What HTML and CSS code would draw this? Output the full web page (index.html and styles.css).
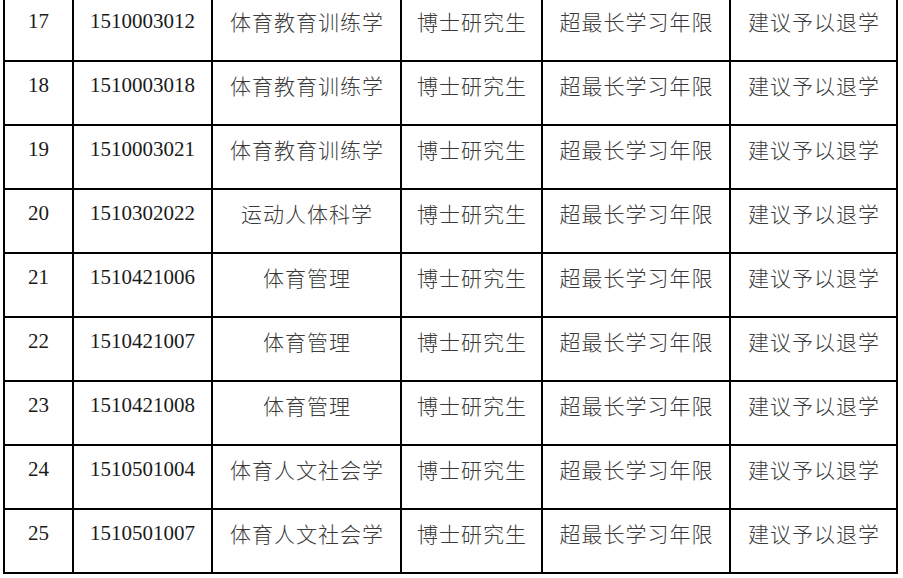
FILE: index.html
```html
<!DOCTYPE html>
<html lang="zh-CN">
<head>
<meta charset="utf-8">
<title>退学名单</title>
<link rel="stylesheet" href="styles.css">
</head>
<body>
<div class="sheet">
  <div class="c num">17</div><div class="c num">1510003012</div><div class="c zh">体育教育训练学</div><div class="c zh">博士研究生</div><div class="c zh">超最长学习年限</div><div class="c zh">建议予以退学</div>
  <div class="c num">18</div><div class="c num">1510003018</div><div class="c zh">体育教育训练学</div><div class="c zh">博士研究生</div><div class="c zh">超最长学习年限</div><div class="c zh">建议予以退学</div>
  <div class="c num">19</div><div class="c num">1510003021</div><div class="c zh">体育教育训练学</div><div class="c zh">博士研究生</div><div class="c zh">超最长学习年限</div><div class="c zh">建议予以退学</div>
  <div class="c num">20</div><div class="c num">1510302022</div><div class="c zh">运动人体科学</div><div class="c zh">博士研究生</div><div class="c zh">超最长学习年限</div><div class="c zh">建议予以退学</div>
  <div class="c num">21</div><div class="c num">1510421006</div><div class="c zh">体育管理</div><div class="c zh">博士研究生</div><div class="c zh">超最长学习年限</div><div class="c zh">建议予以退学</div>
  <div class="c num">22</div><div class="c num">1510421007</div><div class="c zh">体育管理</div><div class="c zh">博士研究生</div><div class="c zh">超最长学习年限</div><div class="c zh">建议予以退学</div>
  <div class="c num">23</div><div class="c num">1510421008</div><div class="c zh">体育管理</div><div class="c zh">博士研究生</div><div class="c zh">超最长学习年限</div><div class="c zh">建议予以退学</div>
  <div class="c num">24</div><div class="c num">1510501004</div><div class="c zh">体育人文社会学</div><div class="c zh">博士研究生</div><div class="c zh">超最长学习年限</div><div class="c zh">建议予以退学</div>
  <div class="c num">25</div><div class="c num">1510501007</div><div class="c zh">体育人文社会学</div><div class="c zh">博士研究生</div><div class="c zh">超最长学习年限</div><div class="c zh">建议予以退学</div>
</div>
</body>
</html>
```

FILE: styles.css
```css
html, body {
  margin: 0;
  padding: 0;
  background: #fff;
}

.sheet {
  display: grid;
  grid-template-columns: 67px 137px 187px 139px 186px 165px;
  grid-auto-rows: 62px;
  gap: 2px;
  padding: 2px;
  background: #000;
  width: max-content;
  margin: -4px 0 0 3px;
}

.c {
  background: #fff;
  text-align: center;
  padding-top: 11px;
  line-height: 24px;
  white-space: nowrap;
}

.num {
  font-family: "Liberation Serif", "Times New Roman", serif;
  font-size: 21px;
  color: #1a1a1a;
}

.zh {
  font-family: "Noto Sans CJK SC", "Noto Sans CJK JP", sans-serif;
  font-size: 21px;
  letter-spacing: 1px;
  padding-left: 1px;
  font-weight: 300;
  color: #3a3a3a;
}
```
